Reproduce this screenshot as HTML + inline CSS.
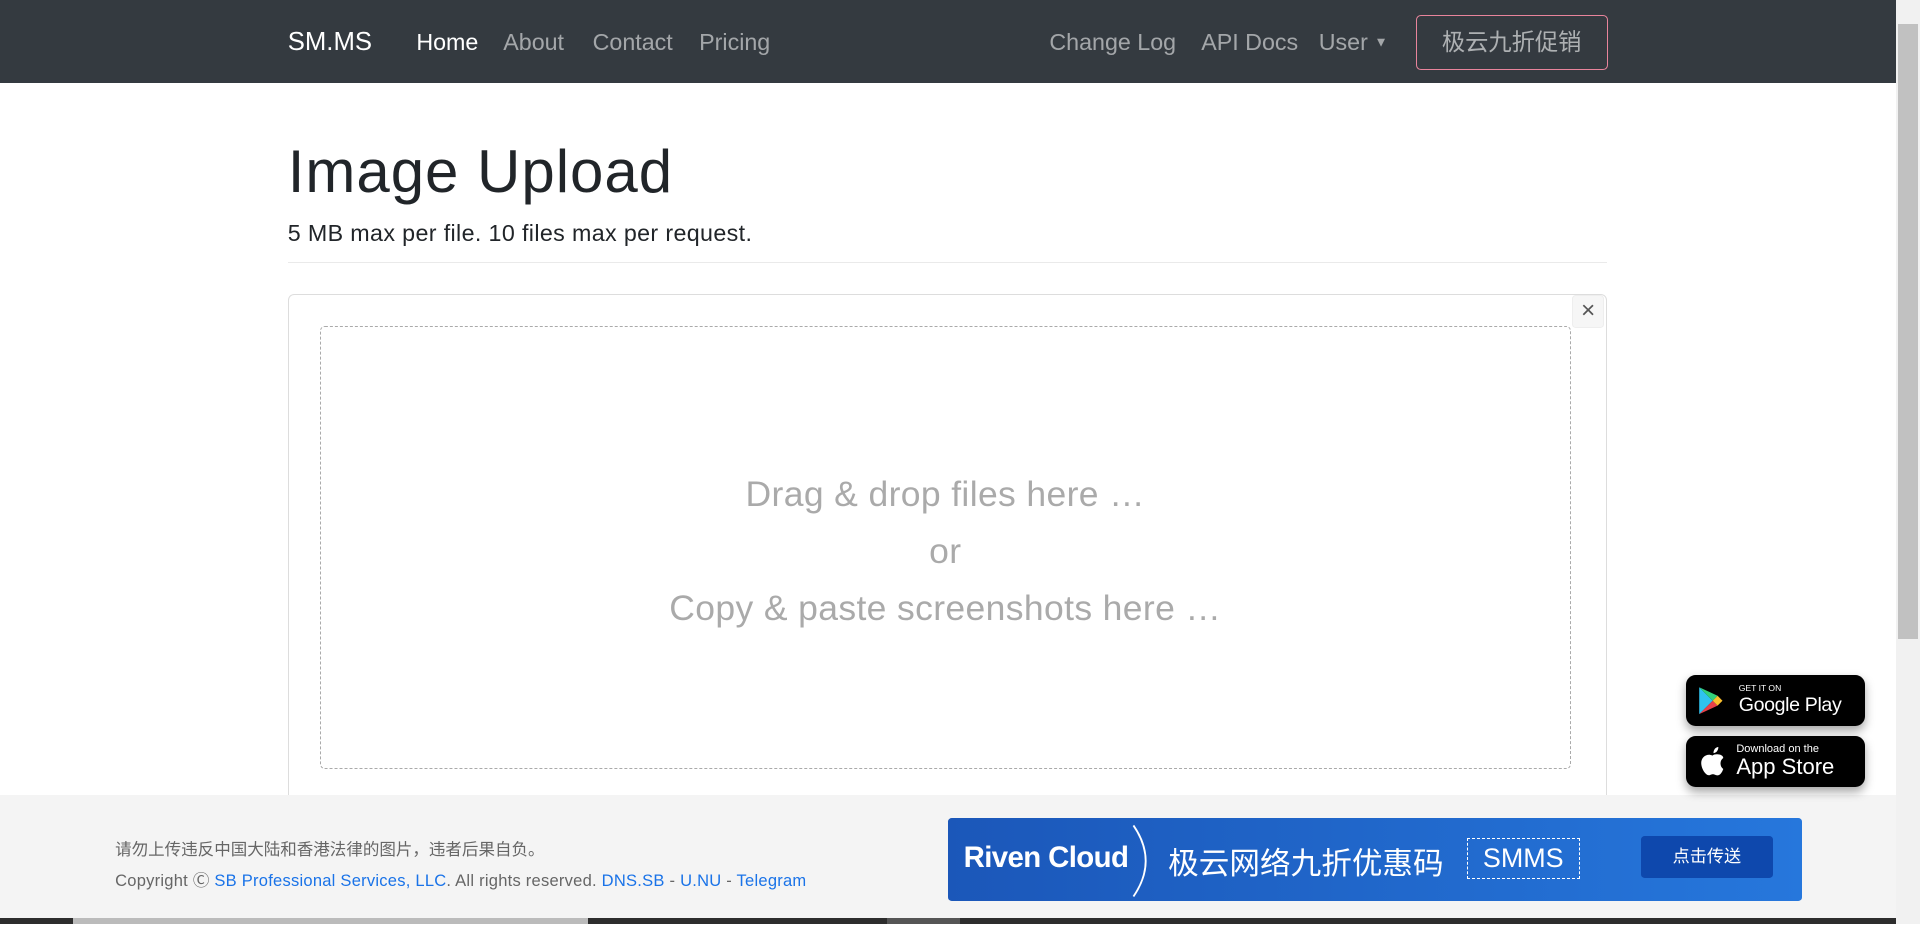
<!DOCTYPE html>
<html><head><meta charset="utf-8"><style>
html{zoom:1.22449}
*{box-sizing:border-box;margin:0;padding:0}
body{width:1568px;height:755px;overflow:hidden;position:relative;background:#fff;font-family:"Liberation Sans","Noto Sans CJK SC",sans-serif;color:#212529}
.nav{position:absolute;left:0;top:0;width:1548px;height:68px;background:#343a40}
.nav span{position:absolute;top:24px;font-size:19px;color:rgba(255,255,255,.55);white-space:nowrap}
.promo{position:absolute;left:1156px;top:12px;width:157px;height:45px;border:1px solid #e8849c;border-radius:4px;color:rgba(255,255,255,.6);font-size:19px;text-align:center;line-height:43px}
h1{position:absolute;left:235px;top:112px;font-size:49px;font-weight:500;letter-spacing:.8px}
.sub{position:absolute;left:235px;top:180px;font-size:19px;letter-spacing:.3px}
.hr{position:absolute;left:235px;top:214px;width:1077px;height:1px;background:#eaeaea}
.card{position:absolute;left:235px;top:240px;width:1077px;height:450px;border:1px solid #ddd;border-radius:5px}
.x{position:absolute;left:1284px;top:241px;width:26px;height:27px;background:#f6f6f6;border:1px solid #eee;border-radius:3px;font-size:20px;color:#555;text-align:center;line-height:24px}
.drop{position:absolute;left:261px;top:266px;width:1022px;height:362px;border:1px dashed #aaa;border-radius:4px;text-align:center;color:#aaa;font-size:29px;line-height:46.5px;padding-top:114px;letter-spacing:.3px}
.foot{position:absolute;left:0;top:649px;width:1548px;height:101px;background:#f4f4f4}
.f1{position:absolute;left:94px;top:683px;font-size:13.5px;color:#666}
.f2{position:absolute;left:94px;top:708px;font-size:13.5px;color:#666;letter-spacing:.2px}
.f2 a{color:#1a73e8;text-decoration:none}
.ban{position:absolute;left:774px;top:668px;width:698px;height:68px;border-radius:3px;background:linear-gradient(90deg,#1b57b9,#2677dc);color:#fff}
.badge{position:absolute;left:1377px;width:146px;height:42px;background:#000;border-radius:8px;box-shadow:0 4px 8px rgba(0,0,0,.35);color:#fff}
.sb{position:absolute;left:1548px;top:0;width:20px;height:755px;background:#f1f1f1}
.bot{position:absolute;left:0;top:750px;width:1548px;height:5px;background:#2d2d2d}
</style></head><body>
<div class="nav">
<span style="left:235px;color:#fff;font-size:21px;top:23px">SM.MS</span>
<span style="left:340px;color:#fff">Home</span>
<span style="left:411px">About</span>
<span style="left:484px">Contact</span>
<span style="left:571px">Pricing</span>
<span style="left:857px">Change Log</span>
<span style="left:981px">API Docs</span>
<span style="left:1077px">User <span style="position:static;font-size:11px;vertical-align:3px">▼</span></span>
<div class="promo">极云九折促销</div>
</div>
<h1>Image Upload</h1>
<div class="sub">5 MB max per file. 10 files max per request.</div>
<div class="hr"></div>
<div class="card"></div>
<div class="x">×</div>
<div class="drop">Drag &amp; drop files here …<br>or<br>Copy &amp; paste screenshots here …</div>
<div class="foot"></div>
<div class="f1">请勿上传违反中国大陆和香港法律的图片，违者后果自负。</div>
<div class="f2">Copyright Ⓒ <a>SB Professional Services, LLC</a>. All rights reserved. <a>DNS.SB</a> - <a>U.NU</a> - <a>Telegram</a></div>
<div class="ban">
<div style="position:absolute;left:13px;top:19px;font-size:24px;font-weight:bold;letter-spacing:-.5px">Riven Cloud</div>
<svg style="position:absolute;left:150px;top:4px" width="20" height="62"><path d="M2 2 Q22 31 2 60" stroke="#fff" stroke-width="1.5" fill="none"/></svg>
<div style="position:absolute;left:180px;top:16px;font-size:25px">极云网络九折优惠码</div>
<div style="position:absolute;left:424px;top:16px;width:92px;height:34px;border:1px dashed #fff;font-size:22px;text-align:center;line-height:32px">SMMS</div>
<div style="position:absolute;left:566px;top:15px;width:108px;height:34px;background:#0e48ad;border-radius:3px;font-size:14px;text-align:center;line-height:34px">点击传送</div>
</div>
<div class="badge" style="top:551px">
<svg style="position:absolute;left:10px;top:9px" width="20" height="24"><path d="M1 1 L1 23 L12 12Z" fill="#2fc3ef"/><path d="M1 1 L12 12 L16 8Z" fill="#33d17a"/><path d="M1 23 L12 12 L16 16Z" fill="#e8414a"/><path d="M16 8 L20 12 L16 16 L12 12Z" fill="#fbc02d"/></svg>
<div style="position:absolute;left:43px;top:7px;font-size:7px">GET IT ON</div>
<div style="position:absolute;left:43px;top:16px;font-size:16px;letter-spacing:-.3px">Google Play</div>
</div>
<div class="badge" style="top:601px">
<svg style="position:absolute;left:11px;top:9px" width="20" height="24"><path d="M10 7 C13 5 19 6 19 9 C16 11 16 16 19 18 C18 21 16 24 13 23 C11 22 10 22 8 23 C5 24 1 18 1 13 C1 8 6 5 10 7Z M11 5 C11 2 13 0 15 0 C15 3 13 5 11 5Z" fill="#fff"/></svg>
<div style="position:absolute;left:41px;top:6px;font-size:9px">Download on the</div>
<div style="position:absolute;left:41px;top:15px;font-size:18px">App Store</div>
</div>
<div class="sb"><div style="position:absolute;left:2px;top:20px;width:16px;height:502px;background:#c1c1c1"></div></div>
<div class="bot"><div style="position:absolute;left:60px;width:420px;height:5px;background:#bbb"></div><div style="position:absolute;left:724px;width:60px;height:5px;background:#555"></div></div>
</body></html>
